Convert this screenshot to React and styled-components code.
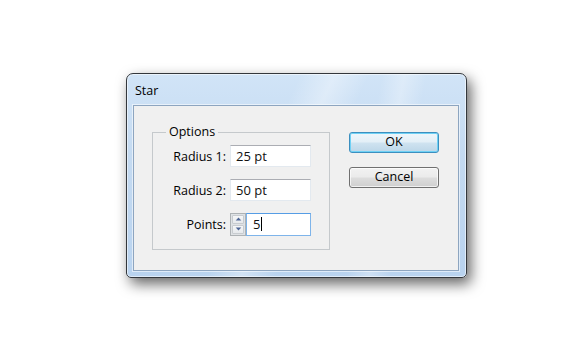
import styled, { createGlobalStyle } from "styled-components";

const Global = createGlobalStyle`
  html, body {
    margin: 0;
    background: #fff;
  }
  body {
    font-family: "Open Sans", "Noto Sans", "Liberation Sans", sans-serif;
    font-size: 12px;
    color: #000;
  }
`;

export default function App() {
  return (
    <>
      <Global />
      <Page>
        <Window>
          <TitleBar>Star</TitleBar>
          <Client>
            <Group>
              <Legend>Options</Legend>
              <Rows>
                <Label>Radius 1:</Label>
                <TextBox value="25 pt" />
                <Label>Radius 2:</Label>
                <TextBox value="50 pt" />
                <Label>Points:</Label>
                <SpinField>
                  <Spinner>
                    <SpinHalf>
                      <Arrow viewBox="0 0 8 5">
                        <path d="M4 0.5 L7.5 4.5 H0.5 Z" />
                      </Arrow>
                    </SpinHalf>
                    <SpinHalf>
                      <Arrow viewBox="0 0 8 5">
                        <path d="M4 4.5 L7.5 0.5 H0.5 Z" />
                      </Arrow>
                    </SpinHalf>
                  </Spinner>
                  <TextBox value="5" focused caret />
                </SpinField>
              </Rows>
            </Group>
            <Buttons>
              <Button primary>OK</Button>
              <Button>Cancel</Button>
            </Buttons>
          </Client>
        </Window>
      </Page>
    </>
  );
}

function TextBox({ value, focused, caret }) {
  return (
    <Field focused={focused}>
      {value}
      {caret && <Caret />}
    </Field>
  );
}

const Page = styled.div`
  width: 580px;
  height: 352px;
  padding: 73px 0 0 126px;
  box-sizing: border-box;
`;

const Window = styled.div`
  width: 341px;
  height: 205px;
  box-sizing: border-box;
  border: 1px solid #33373c;
  border-radius: 7px 7px 5px 5px;
  background:
    linear-gradient(115deg, transparent 40%, rgba(255, 255, 255, 0.35) 48%, transparent 56%),
    linear-gradient(100deg, transparent 68%, rgba(255, 255, 255, 0.3) 74%, transparent 80%),
    linear-gradient(180deg, #d1e4f7 0%, #c4daf1 40%, #b9d3ef 100%);
  box-shadow:
    inset 0 0 0 1px rgba(255, 255, 255, 0.55),
    4px 6px 14px rgba(0, 0, 0, 0.6);
  display: flex;
  flex-direction: column;
`;

const TitleBar = styled.div`
  height: 31px;
  padding: 8px 0 0 8px;
  box-sizing: border-box;
  font-size: 12.5px;
  color: #000;
`;

const Client = styled.div`
  flex: 1;
  margin: 0 7px 6px 6px;
  background: #f0f0f0;
  border: 1px solid #8da5c0;
  box-shadow: 0 0 0 1px rgba(255, 255, 255, 0.55);
  display: flex;
  align-items: flex-start;
  gap: 19px;
  padding: 18px 0 0 18px;
`;

const Group = styled.fieldset`
  margin: 0;
  width: 178px;
  box-sizing: border-box;
  border: 1px solid #c5c9cc;
  padding: 5px 0 14px 0;
  min-width: 0;
`;

const Legend = styled.legend`
  margin-left: 13px;
  padding: 0 3px;
  line-height: 16px;
  font-size: 12.5px;
`;

const Rows = styled.div`
  display: grid;
  grid-template-columns: 73px 81px;
  grid-auto-rows: 22px;
  column-gap: 4px;
  row-gap: 12px;
  align-items: center;
`;

const Label = styled.div`
  text-align: right;
  font-size: 12.5px;
`;

const Field = styled.div`
  height: 22px;
  box-sizing: border-box;
  flex: 1;
  background: #fff;
  border: 1px solid ${(p) => (p.focused ? "#7eb4ea" : "#e3e9ef")};
  border-top-color: ${(p) => (p.focused ? "#569de5" : "#abadb3")};
  padding: 0 0 0 5px;
  font-size: 13px;
  line-height: 20px;
  display: flex;
  align-items: center;
  color: #111;
`;

const Caret = styled.span`
  width: 1px;
  height: 14px;
  margin-left: 1px;
  background: #000;
`;

const SpinField = styled.div`
  display: flex;
  height: 23px;
  ${Field} {
    height: 23px;
    padding-left: 6px;
  }
`;

const Spinner = styled.div`
  width: 16px;
  box-sizing: border-box;
  border: 1px solid #adb2b5;
  background: #dfe2e5;
  display: flex;
  flex-direction: column;
  gap: 1px;
  padding: 1px;
`;

const SpinHalf = styled.div`
  flex: 1;
  display: flex;
  align-items: center;
  justify-content: center;
  background: linear-gradient(180deg, #f6f7f8, #e6e9ec);
  border: 1px solid #c8ccd0;
  border-radius: 1px;
`;

const Arrow = styled.svg`
  width: 7px;
  height: 4px;
  fill: #4d6596;
`;

const Buttons = styled.div`
  margin-top: 8px;
  display: flex;
  flex-direction: column;
  gap: 14px;
  width: 90px;
`;

const Button = styled.div`
  height: 21px;
  box-sizing: border-box;
  border: 1px solid ${(p) => (p.primary ? "#3c8fbf" : "#707070")};
  border-radius: 3px;
  background: ${(p) =>
    p.primary
      ? "linear-gradient(180deg, #eef6fb 0%, #e3eff7 48%, #cfe3f0 52%, #bcd6e8 100%)"
      : "linear-gradient(180deg, #f2f2f2 0%, #ebebeb 48%, #dddddd 52%, #cfcfcf 100%)"};
  box-shadow: ${(p) =>
    p.primary
      ? "inset 0 0 0 1px #6fd1f5"
      : "inset 0 0 0 1px rgba(255, 255, 255, 0.7)"};
  display: flex;
  align-items: center;
  justify-content: center;
  font-size: 12.5px;
  line-height: 1;
  color: #000;
`;
